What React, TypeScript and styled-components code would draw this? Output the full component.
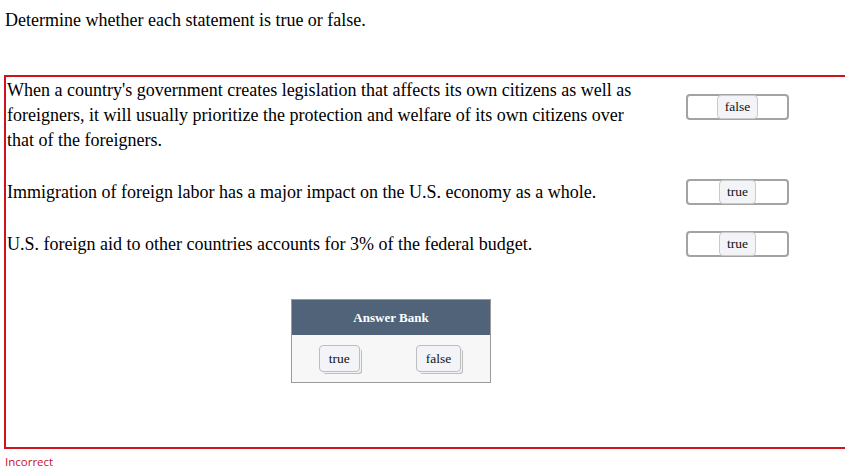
import styled, { createGlobalStyle } from "styled-components";

const GlobalStyle = createGlobalStyle`
  html, body {
    margin: 0;
    padding: 0;
    background: #ffffff;
    overflow: hidden;
  }
  body {
    font-family: "Liberation Serif", "Times New Roman", serif;
    color: #000;
  }
`;

const statements = [
  {
    text: "When a country's government creates legislation that affects its own citizens as well as foreigners, it will usually prioritize the protection and welfare of its own citizens over that of the foreigners.",
    answer: "false",
    nudge: -9,
  },
  {
    text: "Immigration of foreign labor has a major impact on the U.S. economy as a whole.",
    answer: "true",
    nudge: 0,
  },
  {
    text: "U.S. foreign aid to other countries accounts for 3% of the federal budget.",
    answer: "true",
    nudge: 0,
  },
];

export default function App() {
  return (
    <>
      <GlobalStyle />
      <Page>
        <Prompt>Determine whether each statement is true or false.</Prompt>
        <QuestionBox>
          {statements.map((s, i) => (
            <Row key={i}>
              <Statement>{s.text}</Statement>
              <Slot $nudge={s.nudge}>
                <DropBox>
                  <Chip>{s.answer}</Chip>
                </DropBox>
              </Slot>
            </Row>
          ))}
          <BankWrap>
            <Bank>
              <BankHeader>Answer Bank</BankHeader>
              <BankBody>
                <StackChip>true</StackChip>
                <StackChip>false</StackChip>
              </BankBody>
            </Bank>
          </BankWrap>
        </QuestionBox>
        <Feedback>Incorrect</Feedback>
      </Page>
    </>
  );
}

const Page = styled.div`
  padding: 9px 0 0 4px;
`;

const Prompt = styled.div`
  font-size: 18px;
  line-height: 22px;
  padding-left: 1px;
`;

const QuestionBox = styled.div`
  margin-top: 44px;
  border: 2px solid #d0121d;
  border-right: none;
  height: 369px;
  padding-top: 1px;
  box-sizing: content-box;
`;

const Row = styled.div`
  display: flex;
  align-items: center;
  margin-bottom: 26px;
`;

const Statement = styled.div`
  width: 640px;
  font-size: 18px;
  line-height: 25px;
  padding-left: 1px;
`;

const Slot = styled.div<{ $nudge: number }>`
  margin-left: 39px;
  margin-top: ${(p) => p.$nudge * 2}px;
`;

const DropBox = styled.div`
  width: 99px;
  height: 22px;
  border: 2px solid #a3a3a3;
  border-radius: 4px;
  display: flex;
  justify-content: center;
  align-items: center;
  background: #fff;
`;

const Chip = styled.span`
  display: inline-flex;
  align-items: center;
  justify-content: center;
  height: 22px;
  padding: 0 7px;
  background: #f2f4f8;
  border: 1px solid #c9c9c9;
  border-radius: 4px;
  font-size: 13.5px;
  color: #111;
`;

const BankWrap = styled.div`
  padding-left: 285px;
  padding-top: 16px;
`;

const Bank = styled.div`
  width: 198px;
  border: 1px solid #9a9a9a;
  background: #f7f7f7;
`;

const BankHeader = styled.div`
  background: #506379;
  color: #fff;
  font-weight: bold;
  font-size: 13px;
  height: 35px;
  line-height: 35px;
  text-align: center;
`;

const BankBody = styled.div`
  height: 47px;
  display: flex;
  justify-content: center;
  align-items: flex-start;
  gap: 56px;
  padding-top: 10px;
  box-sizing: border-box;
  padding-right: 2px;
`;

const StackChip = styled.span`
  display: inline-flex;
  align-items: center;
  justify-content: center;
  height: 25px;
  padding: 0 9px;
  background: #f2f4f8;
  border: 1px solid #bdbdbd;
  border-radius: 4px;
  font-size: 13.5px;
  color: #111;
  box-shadow: 2px 2px 0 -1px #f2f4f8, 3px 3px 0 -1px #bdbdbd;
`;

const Feedback = styled.div`
  margin-top: 5px;
  padding-left: 1px;
  font-family: "Open Sans", "Noto Sans", sans-serif;
  font-size: 11.5px;
  color: #c8102e;
`;
